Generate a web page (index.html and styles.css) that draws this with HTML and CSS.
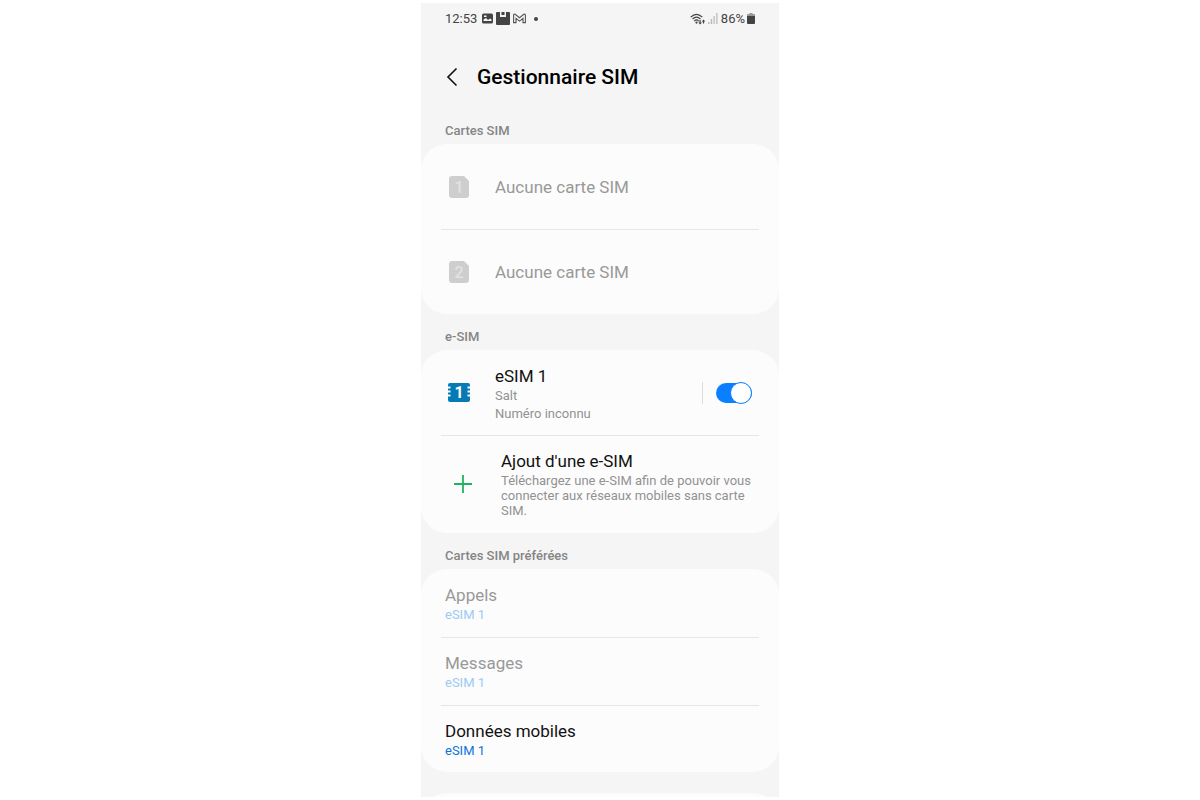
FILE: index.html
```
<!DOCTYPE html>
<html lang="fr">
<head>
  <meta charset="UTF-8">
  <meta name="viewport" content="width=device-width, initial-scale=1.0">
  <title>Gestionnaire SIM</title>
  <link rel="stylesheet" href="styles.css">
</head>
<body>
  <div class="phone">
    <div class="status-bar">
      <div class="status-left">
        <span class="clock">12:53</span>
        <svg width="11" height="11" viewBox="0 0 11 11">
          <rect width="11" height="10" y="0.5" rx="1.500" fill="#444"/>
          <path d="M1.500 8V6.500L4 5l2 2 2-1.500 1.500 1V8z" fill="#f5f5f5"/>
          <path d="M2 2.500h2.500v1.500H2z" fill="#f5f5f5"/>
        </svg>
        <svg width="14" height="13" viewBox="0 0 14 13">
          <path d="M1 0h3v5h6V0h3q1 0 1 1v11q0 1-1 1H1q-1 0-1-1V1q0-1 1-1z" fill="#444"/>
          <path d="M5.500 0h3v3h-3z" fill="#444"/>
        </svg>
        <svg width="13" height="11" viewBox="0 0 13 11">
          <path d="M.6 9.600V2.200Q.7.800 2.200 1.300L6.500 4.700l4.300-3.400Q12.300.8 12.400 2.200v7.400H10V5.300L6.500 8.100 3 5.300v4.300z" fill="none" stroke="#555" stroke-width="1.100"/>
        </svg>
        <span class="more-dot"></span>
      </div>
      <div class="status-right">
        <svg width="16" height="12" viewBox="0 0 16 12">
          <g fill="none" stroke="#444" stroke-width="1.200">
            <path d="M.7 4.200Q6.500-1.600 12.300 4.200"/>
            <path d="M2.500 6.200Q6.500 2 10.500 6.200"/>
            <path d="M4.300 8.100Q6.500 5.700 8.700 8.100"/>
          </g>
          <circle cx="6.500" cy="9.600" r="1.100" fill="#444"/>
          <path d="M9.500 7h1.200v2.500H12l-1.900 2-1.900-2h1.300zM12.900 10.500V8.500h-1.200l1.800-2 1.800 2h-1.200v2z" fill="#444"/>
        </svg>
        <svg width="10" height="11" viewBox="0 0 10 11">
          <path d="M0 9h1.500v2H0zM2.700 6h1.500v5H2.700z" fill="#bbb"/>
          <path d="M5.400 3h1.500v8H5.400zM8.100 0h1.500v11H8.100z" fill="#c4c4c4"/>
        </svg>
        <span class="battery-level">86%</span>
        <svg width="8" height="11" viewBox="0 0 8 11">
          <path d="M2.500 0h3v1H7q1 0 1 1v1H0V2q0-1 1-1h1.500z" fill="#999"/>
          <path d="M0 3h8v7q0 1-1 1H1q-1 0-1-1z" fill="#444"/>
        </svg>
      </div>
    </div>

    <header class="header">
      <button class="back" aria-label="Retour">
        <svg width="12" height="20" viewBox="0 0 12 20">
          <path d="M10.500 1.500L2 10l8.500 8.500" fill="none" stroke="#111" stroke-width="1.600"/>
        </svg>
      </button>
      <h1>Gestionnaire SIM</h1>
    </header>

    <h2>Cartes SIM</h2>
    <div class="card">
      <button class="row sim" disabled>
        <svg class="icon" width="28" height="28" viewBox="0 0 28 28">
          <path d="M7 3h12l5 5v14q0 3-3 3H7q-3 0-3-3V6q0-3 3-3z" fill="#cecece"/>
          <text x="14" y="20" class="sim-number">1</text>
        </svg>
        <span class="title">Aucune carte SIM</span>
      </button>
      <button class="row sim" disabled>
        <svg class="icon" width="28" height="28" viewBox="0 0 28 28">
          <path d="M7 3h12l5 5v14q0 3-3 3H7q-3 0-3-3V6q0-3 3-3z" fill="#cecece"/>
          <text x="14" y="20" class="sim-number">2</text>
        </svg>
        <span class="title">Aucune carte SIM</span>
      </button>
    </div>

    <h2>e-SIM</h2>
    <div class="card">
      <div class="row esim">
        <svg class="icon" width="28" height="28" viewBox="0 0 28 28">
          <path d="M5 4h18q2 0 2 2v1.500h-2.500v2H25v2h-2.500v2H25v2h-2.500v2H25V21q0 2-2 2H5q-2 0-2-2v-3.500h2.500v-2H3v-2h2.500v-2H3v-2h2.500v-2H3V6q0-2 2-2z" fill="#067ab4"/>
          <text x="14" y="19" class="esim-number">1</text>
        </svg>
        <label class="text" for="esim1">
          <span class="title">eSIM 1</span>
          <span class="sub">Salt</span>
          <span class="sub">Numéro inconnu</span>
        </label>
        <span class="separator"></span>
        <input type="checkbox" id="esim1" class="switch" checked>
      </div>
      <button class="row add">
        <svg class="icon" width="36" height="20" viewBox="0 0 36 20">
          <path d="M9 10h18M18 1v18" stroke="#1fb45c" stroke-width="1.800"/>
        </svg>
        <span class="text">
          <span class="title">Ajout d'une e-SIM</span>
          <span class="description">Téléchargez une e-SIM afin de pouvoir vous connecter aux réseaux mobiles sans carte SIM.</span>
        </span>
      </button>
    </div>

    <h2>Cartes SIM préférées</h2>
    <div class="card">
      <button class="row pref" disabled>
        <span class="title">Appels</span>
        <span class="value">eSIM 1</span>
      </button>
      <button class="row pref" disabled>
        <span class="title">Messages</span>
        <span class="value">eSIM 1</span>
      </button>
      <button class="row pref">
        <span class="title">Données mobiles</span>
        <span class="value">eSIM 1</span>
      </button>
    </div>

    <div class="card next-card"></div>
  </div>
</body>
</html>
```
FILE: styles.css
```
* {
  box-sizing: border-box;
}

body {
  margin: 0;
  padding: 3px 0;
  height: 100vh;
  display: flex;
  justify-content: center;
  background: #fff;
  font-family: Roboto, sans-serif;
  color: #111;
}

.phone {
  width: 100%;
  max-width: 358px;
  overflow: hidden;
  background: #f5f5f5;
}

button {
  border: none;
  padding: 0;
  background: none;
  font: inherit;
  color: inherit;
  text-align: left;
  cursor: pointer;
}

button:disabled {
  cursor: default;
}

svg {
  display: block;
  flex-shrink: 0;
}

/* Status bar */
.status-bar {
  display: flex;
  justify-content: space-between;
  align-items: center;
  height: 31px;
  padding: 0 24px;
  font-size: 13px;
  color: #444;
}

.status-left,
.status-right {
  display: flex;
  align-items: center;
  gap: 3px;
}

.clock {
  margin-right: 2px;
}

.more-dot {
  width: 4px;
  height: 4px;
  margin-left: 5px;
  border-radius: 50%;
  background: #444;
}

.battery-level {
  margin-left: 1px;
}

.status-right {
  gap: 2px;
}

/* Header */
.header {
  display: flex;
  align-items: center;
  gap: 19px;
  padding: 31px 25px 19px;
}

h1 {
  margin: 0;
  font-size: 21px;
  line-height: 24px;
  font-weight: 500;
  color: #000;
}

h2 {
  margin: 0;
  padding: 15px 24px 5px;
  font-size: 13px;
  line-height: 16px;
  font-weight: 500;
  color: #858585;
}

/* Cards */
.card {
  padding: 0 20px;
  border-radius: 26px;
  background: #fcfcfc;
}

.next-card {
  height: 80px;
  margin-top: 21px;
}

.row {
  display: flex;
  align-items: center;
  width: 100%;
  padding: 0 4px;
}

.row + .row {
  border-top: 1px solid #e6e6e6;
}

.icon {
  margin-right: 22px;
}

.title {
  display: block;
  font-size: 17px;
  line-height: 22px;
  color: #111;
}

.row:disabled .title {
  color: #999;
}

.text {
  flex: 1;
}

.sub {
  display: block;
  font-size: 13px;
  line-height: 18px;
  color: #929292;
}

.sim {
  min-height: 85px;
}

.sim-number,
.esim-number {
  font-size: 16px;
  font-weight: 500;
  text-anchor: middle;
  fill: #e2e2e2;
}

.esim-number {
  font-weight: 700;
  fill: #fff;
}

.esim {
  min-height: 85px;
  padding-right: 7px;
}

.esim .text {
  padding-top: 2px;
}

.separator {
  width: 1px;
  height: 22px;
  margin-right: 13px;
  background: #ddd;
}

.switch {
  appearance: none;
  position: relative;
  width: 36px;
  height: 20px;
  margin: 0;
  border-radius: 10px;
  background: #bbb;
  cursor: pointer;
}

.switch::after {
  content: '';
  box-sizing: border-box;
  position: absolute;
  top: -1px;
  left: 0;
  width: 22px;
  height: 22px;
  border: 1px solid #bbb;
  border-radius: 50%;
  background: #fff;
}

.switch:checked {
  background: #0a7fff;
}

.switch:checked::after {
  left: auto;
  right: 0;
  border-color: #0a7fff;
}

.add {
  padding: 14px 4px 15px;
}

.add .icon {
  margin-right: 20px;
}

.add .text {
  margin-right: -4px;
}

.description {
  display: block;
  margin-top: 1px;
  font-size: 13px;
  line-height: 15px;
  color: #929292;
}

.pref {
  display: block;
  padding: 15px 4px 13px;
}

.pref + .pref {
  padding-top: 14px;
}

.pref:last-child {
  padding-bottom: 12px;
}

.value {
  display: block;
  font-size: 13px;
  line-height: 18px;
  color: #0b76d8;
}

.pref:disabled .value {
  color: #9dcaf3;
}
```
